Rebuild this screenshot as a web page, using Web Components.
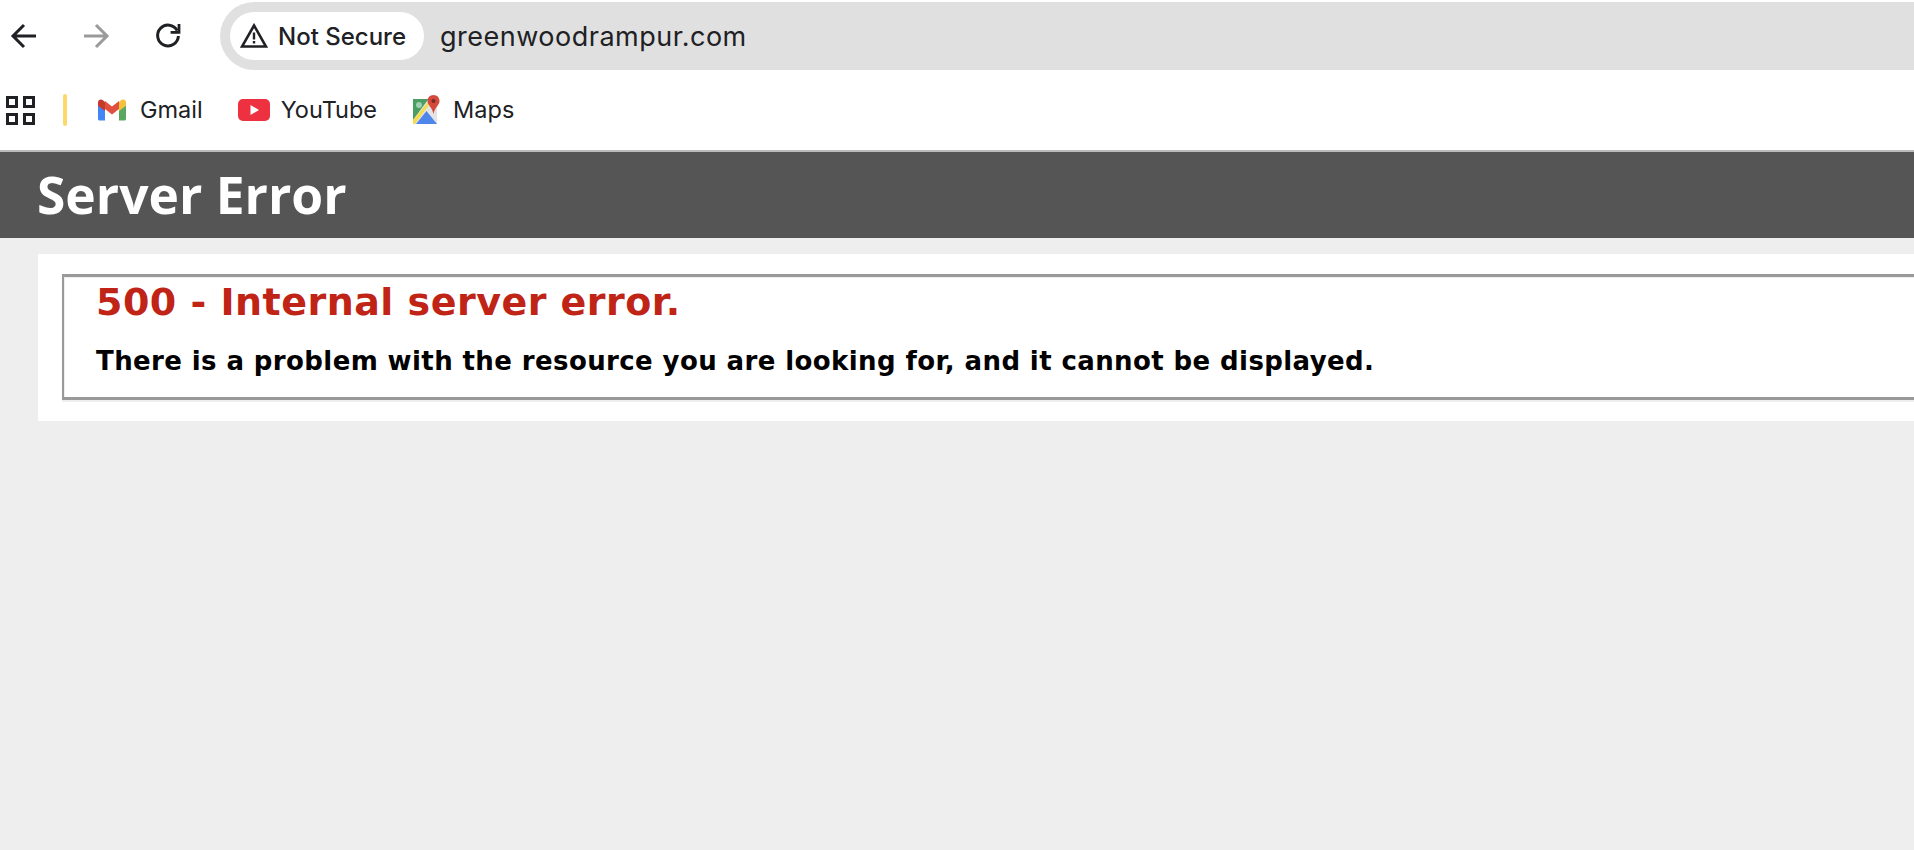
<!DOCTYPE html>
<html>
<head>
<meta charset="utf-8">
<title>Server Error</title>
<style>
html, body { margin: 0; padding: 0; height: 100%; overflow: hidden; background: #eeeeee; }
</style>
</head>
<body>
<browser-toolbar>
    <nav-icon kind="back"></nav-icon>
    <nav-icon kind="forward"></nav-icon>
    <nav-icon kind="reload"></nav-icon>
    <address-bar url="greenwoodrampur.com"></address-bar>
</browser-toolbar>
<bookmark-bar>
    <bookmark-item label="Gmail" icon="gmail" style="--label-gap:13px"></bookmark-item>
    <bookmark-item label="YouTube" icon="youtube"></bookmark-item>
    <bookmark-item label="Maps" icon="maps"></bookmark-item>
</bookmark-bar>
<error-header>Server Error</error-header>
<error-panel>
    <span slot="title">500 - Internal server error.</span>
    <span slot="message">There is a problem with the resource you are looking for, and it cannot be displayed.</span>
</error-panel>

<script>
class NavIcon extends HTMLElement{
    constructor(){
        super();
        this.attachShadow({mode:"open"});
    }
    connectedCallback(){
        const kind = this.getAttribute("kind");
        let svg;
        if(kind === "reload"){
            svg = `<svg width="28" height="28" viewBox="0 0 28 28" fill="none" stroke="#202124" stroke-width="3">
                <path d="M23.2 8.6A10.4 10.4 0 1 0 24.4 14"/>
                <path d="M25 2V10.4H16.6" stroke-width="2.8"/></svg>`;
        }else if(kind === "back"){
            svg = `<svg width="28" height="28" viewBox="0 0 28 28" fill="none" stroke="#202124" stroke-width="3">
                <path d="M26 14H4M14 3 3 14 14 25"/></svg>`;
        }else{
            svg = `<svg width="28" height="28" viewBox="0 0 28 28" fill="none" stroke="#9a9a9a" stroke-width="3">
                <path d="M2 14H24M14 3 25 14 14 25"/></svg>`;
        }
        this.shadowRoot.innerHTML = `<style>
            :host{ display:flex; width:28px; height:28px; }
        </style>${svg}`;
    }
}
customElements.define("nav-icon", NavIcon);

const BrowserToolbarTemplate = document.createElement("template");
BrowserToolbarTemplate.innerHTML = `
<style>
:host{
    display:flex;
    align-items:center;
    gap:44px;
    height:68px;
    padding-left:10px;
    border-top:2px solid #fff;
    background:#fff;
}
</style>
<slot></slot>`;
class BrowserToolbar extends HTMLElement{
    constructor(){
        super();
        this.attachShadow({mode:"open"}).appendChild(BrowserToolbarTemplate.content.cloneNode(true));
    }
}
customElements.define("browser-toolbar", BrowserToolbar);

const AddressBarTemplate = document.createElement("template");
AddressBarTemplate.innerHTML = `
<style>
:host{
    display:flex;
    flex:1;
    align-items:center;
    height:68px;
    margin-left:-6px;
    padding-left:10px;
    background:#e0e0e0;
    border-radius:34px 0 0 34px;
    font-family:Inter, "Liberation Sans", sans-serif;
    color:#202124;
}
.chip{
    display:flex;
    align-items:center;
    gap:10px;
    box-sizing:border-box;
    width:194px;
    height:48px;
    padding-left:10px;
    background:#fff;
    border-radius:24px;
    font-size:24px;
    font-weight:500;
    white-space:nowrap;
}
.url{
    margin-left:16px;
    font-size:27px;
    letter-spacing:.5px;
}
</style>
<div class="chip">
    <svg width="28" height="26" viewBox="0 0 28 26" fill="none">
        <path d="M14 2.5 26 23.5H2Z" stroke="#202124" stroke-width="2.6"/>
        <path d="M14 9.5V16.5" stroke="#202124" stroke-width="2.4"/>
        <path d="M14 18V20.5" stroke="#202124" stroke-width="2.4"/>
    </svg>
    <span>Not Secure</span>
</div>
<span class="url"></span>`;
class AddressBar extends HTMLElement{
    constructor(){
        super();
        this.attachShadow({mode:"open"}).appendChild(AddressBarTemplate.content.cloneNode(true));
    }
    connectedCallback(){
        this.shadowRoot.querySelector(".url").textContent = this.getAttribute("url");
    }
}
customElements.define("address-bar", AddressBar);

const BookmarkBarTemplate = document.createElement("template");
BookmarkBarTemplate.innerHTML = `
<style>
:host{
    display:flex;
    align-items:center;
    height:80px;
    padding-left:6px;
    background:#fff;
}
.apps{
    display:grid;
    grid-template-columns:12px 12px;
    gap:5px;
}
.apps i{
    display:block;
    box-sizing:border-box;
    width:12px;
    height:12px;
    border:3px solid #202124;
}
.divider{
    width:4px;
    height:32px;
    margin:0 30px 0 28px;
    border-radius:2px;
    background:#fbd96b;
}
.items{
    display:flex;
    align-items:center;
    gap:35px;
}
</style>
<div class="apps"><i></i><i></i><i></i><i></i></div>
<div class="divider"></div>
<div class="items"><slot></slot></div>`;
class BookmarkBar extends HTMLElement{
    constructor(){
        super();
        this.attachShadow({mode:"open"}).appendChild(BookmarkBarTemplate.content.cloneNode(true));
    }
}
customElements.define("bookmark-bar", BookmarkBar);

const BookmarkIcons = {
    gmail: `<svg width="30" height="24" viewBox="0 0 30 24">
        <path d="M1 6.5V21a1.6 1.6 0 0 0 1.6 1.6H8V10Z" fill="#4285f4"/>
        <path d="M22 10V22.6h5.4A1.6 1.6 0 0 0 29 21V6.5Z" fill="#5aa85f"/>
        <path d="M22 3 15 8.6 8 3V11L15 16.4 22 11Z" fill="#e0503f"/>
        <path d="M1 4.5V7.8L8 13V4L5.6 2.1C3.6.7 1 2 1 4.5Z" fill="#c5392b"/>
        <path d="M22 4V13L29 7.8V4.5C29 2 26.4.7 24.4 2.1Z" fill="#f5c03a"/>
    </svg>`,
    youtube: `<svg width="32" height="22" viewBox="0 0 32 22">
        <rect x="0" y="0" width="32" height="22" rx="5" fill="#ee3140"/>
        <path d="M12.5 6 21 11 12.5 16Z" fill="#fff"/>
    </svg>`,
    maps: `<svg width="30" height="30" viewBox="0 0 30 30">
        <rect x="1" y="4" width="24" height="25" fill="#e4e4e4"/>
        <path d="M1 4H16.5L1 25Z" fill="#4a9d63"/>
        <circle cx="7" cy="10" r="3" fill="#9fd0ae"/>
        <path d="M1 25 17 6 18.5 8 3 29H1Z" fill="#f3dc4e"/>
        <path d="M4 29 14.5 16 25 29Z" fill="#4f86ec"/>
        <path d="M21.5 0C17.8 0 15.5 2.8 15.5 6C15.5 10 20 12 21.5 19C23 12 27.5 10 27.5 6C27.5 2.8 25.2 0 21.5 0Z" fill="#d4493c"/>
        <circle cx="21.5" cy="6" r="2" fill="#7c2a24"/>
    </svg>`
};

const BookmarkItemTemplate = document.createElement("template");
BookmarkItemTemplate.innerHTML = `
<style>
:host{
    display:flex;
    align-items:center;
    gap:var(--label-gap, 11px);
    font-family:Inter, "Liberation Sans", sans-serif;
    font-size:23.5px;
    color:#202124;
}
.icon{ display:flex; }
.label{ margin-bottom:2px; }
</style>
<span class="icon"></span><span class="label"></span>`;
class BookmarkItem extends HTMLElement{
    constructor(){
        super();
        this.attachShadow({mode:"open"}).appendChild(BookmarkItemTemplate.content.cloneNode(true));
    }
    connectedCallback(){
        this.shadowRoot.querySelector(".icon").innerHTML = BookmarkIcons[this.getAttribute("icon")];
        this.shadowRoot.querySelector(".label").textContent = this.getAttribute("label");
    }
}
customElements.define("bookmark-item", BookmarkItem);

const ErrorHeaderTemplate = document.createElement("template");
ErrorHeaderTemplate.innerHTML = `
<style>
:host{
    display:flex;
    align-items:center;
    box-sizing:border-box;
    height:88px;
    padding:0 0 2px 37px;
    border-top:2px solid #bbbbbb;
    background:#555555;
    color:#fff;
    font-family:"Open Sans", "Liberation Sans", sans-serif;
    font-size:51.5px;
    font-weight:700;
}
</style>
<slot></slot>`;
class ErrorHeader extends HTMLElement{
    constructor(){
        super();
        this.attachShadow({mode:"open"}).appendChild(ErrorHeaderTemplate.content.cloneNode(true));
    }
}
customElements.define("error-header", ErrorHeader);

const ErrorPanelTemplate = document.createElement("template");
ErrorPanelTemplate.innerHTML = `
<style>
:host{
    display:block;
    margin:16px 0 0 38px;
    padding:20px 0 21px 24px;
    background:#fff;
    font-family:"DejaVu Sans", Verdana, sans-serif;
    font-weight:bold;
}
.box{
    box-sizing:border-box;
    height:126px;
    padding:2px 0 0 32px;
    border:solid #999999;
    border-width:3px 0 3px 2px;
    box-shadow:inset 1px 1px 0 #eeeeee, 0 2px 0 #eeeeee;
}
.title{
    color:#bf2416;
    font-size:38px;
    letter-spacing:.48px;
    line-height:46px;
}
.message{
    margin-top:20px;
    color:#000;
    font-size:26px;
    letter-spacing:.4px;
    line-height:32px;
}
</style>
<div class="box">
    <div class="title"><slot name="title"></slot></div>
    <div class="message"><slot name="message"></slot></div>
</div>`;
class ErrorPanel extends HTMLElement{
    constructor(){
        super();
        this.attachShadow({mode:"open"}).appendChild(ErrorPanelTemplate.content.cloneNode(true));
    }
}
customElements.define("error-panel", ErrorPanel);
</script>
</body>
</html>
